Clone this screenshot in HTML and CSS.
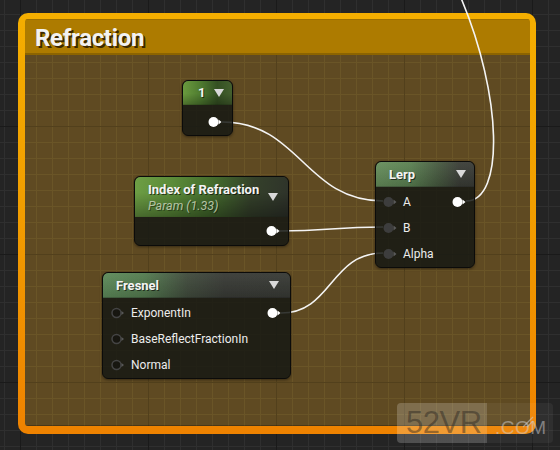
FILE: index.html
```html
<!DOCTYPE html>
<html>
<head>
<meta charset="utf-8">
<link rel="stylesheet" href="styles.css">
</head>
<body>
<div class="canvas">
  <div class="comment">
    <div class="comment-inner">
      <div class="comment-title">Refraction</div>
      <div class="comment-body"></div>
    </div>
  </div>

  <svg class="wires" width="560" height="450" viewBox="0 0 560 450">
    <path d="M222 122 C 300 122, 305 201, 383 201"/>
    <path d="M279 231 C 330 231, 332 227, 383 227"/>
    <path d="M281 313 C 332 313, 330 253, 383 253"/>
    <path d="M466 201 C 505 201, 502 95, 461 -2"/>
  </svg>

  <div class="node n-const">
    <div class="node-header hdr-const"><span class="title">1</span><span class="caret"></span></div>
    <div class="node-body">
      <div class="row out-only">
        <svg class="pin" width="14" height="12" viewBox="0 0 14 12"><circle cx="5.5" cy="6" r="5" class="pin-on"/><polygon points="10.5,3.5 13.5,6 10.5,8.5" class="pin-on"/></svg>
      </div>
    </div>
  </div>

  <div class="node n-ior">
    <div class="node-header hdr-ior">
      <div class="titles"><span class="title">Index of Refraction</span><span class="subtitle">Param (1.33)</span></div>
      <span class="caret"></span>
    </div>
    <div class="node-body">
      <div class="row out-only">
        <svg class="pin" width="14" height="12" viewBox="0 0 14 12"><circle cx="5.5" cy="6" r="5" class="pin-on"/><polygon points="10.5,3.5 13.5,6 10.5,8.5" class="pin-on"/></svg>
      </div>
    </div>
  </div>

  <div class="node n-lerp">
    <div class="node-header hdr-lerp"><span class="title">Lerp</span><span class="caret"></span></div>
    <div class="node-body">
      <div class="row">
        <svg class="pin" width="14" height="12" viewBox="0 0 14 12"><circle cx="5.5" cy="6" r="5" class="pin-in"/><polygon points="10.5,3.5 13.5,6 10.5,8.5" class="pin-in-arrow"/></svg>
        <span class="label">A</span>
        <svg class="pin pin-right" width="14" height="12" viewBox="0 0 14 12"><circle cx="5.5" cy="6" r="5" class="pin-on"/><polygon points="10.5,3.5 13.5,6 10.5,8.5" class="pin-on"/></svg>
      </div>
      <div class="row">
        <svg class="pin" width="14" height="12" viewBox="0 0 14 12"><circle cx="5.5" cy="6" r="5" class="pin-in"/><polygon points="10.5,3.5 13.5,6 10.5,8.5" class="pin-in-arrow"/></svg>
        <span class="label">B</span>
      </div>
      <div class="row">
        <svg class="pin" width="14" height="12" viewBox="0 0 14 12"><circle cx="5.5" cy="6" r="5" class="pin-in"/><polygon points="10.5,3.5 13.5,6 10.5,8.5" class="pin-in-arrow"/></svg>
        <span class="label">Alpha</span>
      </div>
    </div>
  </div>

  <div class="node n-fresnel">
    <div class="node-header hdr-fresnel"><span class="title">Fresnel</span><span class="caret"></span></div>
    <div class="node-body">
      <div class="row">
        <svg class="pin" width="14" height="12" viewBox="0 0 14 12"><circle cx="5.5" cy="6" r="4.5" class="pin-off"/><polygon points="10.5,4 13,6 10.5,8" class="pin-in-arrow"/></svg>
        <span class="label">ExponentIn</span>
        <svg class="pin pin-right" width="14" height="12" viewBox="0 0 14 12"><circle cx="5.5" cy="6" r="5" class="pin-on"/><polygon points="10.5,3.5 13.5,6 10.5,8.5" class="pin-on"/></svg>
      </div>
      <div class="row">
        <svg class="pin" width="14" height="12" viewBox="0 0 14 12"><circle cx="5.5" cy="6" r="4.5" class="pin-off"/><polygon points="10.5,4 13,6 10.5,8" class="pin-in-arrow"/></svg>
        <span class="label">BaseReflectFractionIn</span>
      </div>
      <div class="row">
        <svg class="pin" width="14" height="12" viewBox="0 0 14 12"><circle cx="5.5" cy="6" r="4.5" class="pin-off"/><polygon points="10.5,4 13,6 10.5,8" class="pin-in-arrow"/></svg>
        <span class="label">Normal</span>
      </div>
    </div>
  </div>

  <div class="watermark">
    <span class="wm-main">52VR</span><span class="wm-com">.COM</span>
  </div>

  <svg class="grip" width="14" height="14" viewBox="0 0 14 14">
    <line x1="2" y1="12" x2="12" y2="2"/>
    <line x1="6" y1="12" x2="12" y2="6"/>
  </svg>
</div>
</body>
</html>
```

FILE: styles.css
```css
html, body {
  margin: 0;
  padding: 0;
}

body {
  background: #242424;
  font-family: Roboto, "Liberation Sans", sans-serif;
}

.canvas {
  position: relative;
  width: 560px;
  height: 450px;
  overflow: hidden;
  background-color: #242424;
  background-image:
    linear-gradient(to right, #1a1a1a 1px, transparent 1px),
    linear-gradient(to bottom, #1a1a1a 1px, transparent 1px),
    linear-gradient(to right, #2f2f2f 1px, transparent 1px),
    linear-gradient(to bottom, #2f2f2f 1px, transparent 1px);
  background-size: 128px 128px, 128px 128px, 16px 16px, 16px 16px;
  background-position: 20px 0, 0 126px, 4px 0, 0 14px;
}

/* Comment box */
.comment {
  position: absolute;
  left: 18px;
  top: 13px;
  width: 518px;
  height: 421px;
  box-sizing: border-box;
  padding: 6px 6px 8px 7px;
  border-radius: 10px;
  background: linear-gradient(to bottom, #f4ae00 0%, #f19e00 45%, #ee8200 100%);
  display: flex;
}

.comment-inner {
  flex: 1;
  display: flex;
  flex-direction: column;
  border-radius: 3px;
  overflow: hidden;
}

.comment-title {
  height: 36px;
  box-sizing: border-box;
  background: #ad7b00;
  border-top: 1px solid #9c6f00;
  border-bottom: 2px solid #8c6400;
  display: flex;
  align-items: center;
  padding: 2px 0 0 10px;
  color: #f2f2f2;
  font-weight: 700;
  font-size: 24px;
  letter-spacing: -0.3px;
  text-shadow: 2px 2px 0 rgba(40, 25, 0, 0.85);
}

.comment-body {
  flex: 1;
  background-color: #5f4a22;
  background-image:
    linear-gradient(to right, #52401c 1px, transparent 1px),
    linear-gradient(to bottom, #52401c 1px, transparent 1px),
    linear-gradient(to right, #6a5527 1px, transparent 1px),
    linear-gradient(to bottom, #6a5527 1px, transparent 1px);
  background-size: 128px 128px, 128px 128px, 16px 16px, 16px 16px;
  background-position: 20px 0, 0 126px, 4px 0, 0 14px;
  background-attachment: fixed;
  box-shadow: inset 0 -1px 0 rgba(0, 0, 0, 0.25);
}

/* Wires */
.wires {
  position: absolute;
  left: 0;
  top: 0;
}

.wires path {
  fill: none;
  stroke: #f4f4f4;
  stroke-width: 1.6;
}

/* Nodes */
.node {
  position: absolute;
  box-sizing: border-box;
  display: flex;
  flex-direction: column;
  border: 1px solid #0b0b0a;
  border-radius: 6px;
  background: rgba(22, 24, 20, 0.86);
  box-shadow: 0 1px 3px rgba(0, 0, 0, 0.45), inset 0 1px 0 rgba(255, 255, 255, 0.12);
  overflow: hidden;
  color: #ececec;
}

.node-header {
  display: flex;
  align-items: center;
  justify-content: space-between;
  box-sizing: border-box;
  border-radius: 5px 5px 0 0;
  border-bottom: 1px solid rgba(0, 0, 0, 0.35);
}

.title {
  font-weight: 700;
  font-size: 13px;
  color: #f4f4f4;
  text-shadow: 1px 1px 0 rgba(0, 0, 0, 0.6);
}

.subtitle {
  font-style: italic;
  font-size: 12.5px;
  color: #b3c3a4;
  text-shadow: 1px 1px 0 rgba(0, 0, 0, 0.4);
}

.titles {
  display: flex;
  flex-direction: column;
  gap: 1px;
}

.caret {
  width: 0;
  height: 0;
  border-left: 5.5px solid transparent;
  border-right: 5.5px solid transparent;
  border-top: 8px solid #d9d9d9;
}

.node-body {
  flex: 1;
  display: flex;
  flex-direction: column;
}

.row {
  height: 26px;
  display: flex;
  align-items: center;
  gap: 6.5px;
}

.out-only {
  justify-content: flex-end;
}

.label {
  font-size: 12px;
  color: #ececec;
}

.pin {
  flex: none;
  display: block;
}

.pin-right {
  margin-left: auto;
}

.pin-on {
  fill: #ffffff;
}

.pin-in {
  fill: #3d3d3d;
}

.pin-in-arrow {
  fill: #595959;
}

.pin-off {
  fill: rgba(10, 10, 10, 0.4);
  stroke: #444444;
  stroke-width: 1.5;
}

/* Node "1" */
.n-const {
  left: 182px;
  top: 80px;
  width: 51px;
  height: 56px;
}

.hdr-const {
  height: 24px;
  padding: 0 8px 0 15px;
  background:
    linear-gradient(to bottom, rgba(0, 0, 0, 0) 55%, rgba(0, 0, 0, 0.25) 100%),
    linear-gradient(to right, #6a9a3e 0%, #4f7c30 35%, #345022 70%, #44602e 100%);
}

.n-const .node-body {
  padding: 5px 10px 0 0;
}

.n-const .row {
  height: 24px;
}

/* Index of Refraction */
.n-ior {
  left: 134px;
  top: 176px;
  width: 155px;
  height: 70px;
}

.hdr-ior {
  height: 40px;
  padding: 1px 10px 0 13px;
  background:
    linear-gradient(to bottom, rgba(0, 0, 0, 0) 40%, rgba(0, 0, 0, 0.3) 100%),
    linear-gradient(100deg, #6e9f45 0%, #5a8a38 25%, #436a2c 50%, #34402a 75%, #2e322a 100%);
}

.n-ior .node-body {
  padding: 1px 8px 0 0;
}

/* Lerp */
.n-lerp {
  left: 375px;
  top: 161px;
  width: 100px;
  height: 107px;
}

.hdr-lerp {
  height: 25px;
  padding: 0 8px 0 13px;
  background:
    linear-gradient(to bottom, rgba(255, 255, 255, 0.05) 0%, rgba(0, 0, 0, 0.15) 100%),
    linear-gradient(to right, #678f5c 0%, #5b8152 35%, #46583f 65%, #3b3e37 85%, #3a3c37 100%);
}

.n-lerp .node-body {
  padding: 2px 8.5px 0 6.5px;
}

/* Fresnel */
.n-fresnel {
  left: 102px;
  top: 272px;
  width: 189px;
  height: 107px;
}

.hdr-fresnel {
  height: 25px;
  padding: 0 11px 0 13px;
  background:
    linear-gradient(to bottom, rgba(255, 255, 255, 0.04) 0%, rgba(0, 0, 0, 0.15) 100%),
    linear-gradient(to right, #5f8c5b 0%, #557d51 22%, #424d3e 45%, #3a3c37 65%, #393b36 100%);
}

.n-fresnel .node-body {
  padding: 2px 9px 0 7.5px;
}

/* Watermark */
.watermark {
  position: absolute;
  left: 397px;
  top: 403px;
  width: 156px;
  height: 40px;
  border-radius: 4px;
  background: linear-gradient(to right, rgba(255, 255, 255, 0.2) 0, rgba(255, 255, 255, 0.2) 90px, rgba(255, 255, 255, 0.05) 90px);
  display: flex;
  align-items: center;
  font-family: "Liberation Sans", Arial, sans-serif;
}

.wm-main {
  width: 90px;
  box-sizing: border-box;
  padding-left: 9px;
  font-size: 31px;
  color: rgba(40, 36, 30, 0.45);
  letter-spacing: -0.5px;
}

.wm-com {
  padding-left: 8px;
  padding-top: 9px;
  font-size: 19px;
  color: rgba(210, 210, 210, 0.5);
  letter-spacing: 0.5px;
}

.grip {
  position: absolute;
  left: 521px;
  top: 415px;
}

.grip line {
  stroke: rgba(200, 200, 200, 0.6);
  stroke-width: 1.2;
}
```
